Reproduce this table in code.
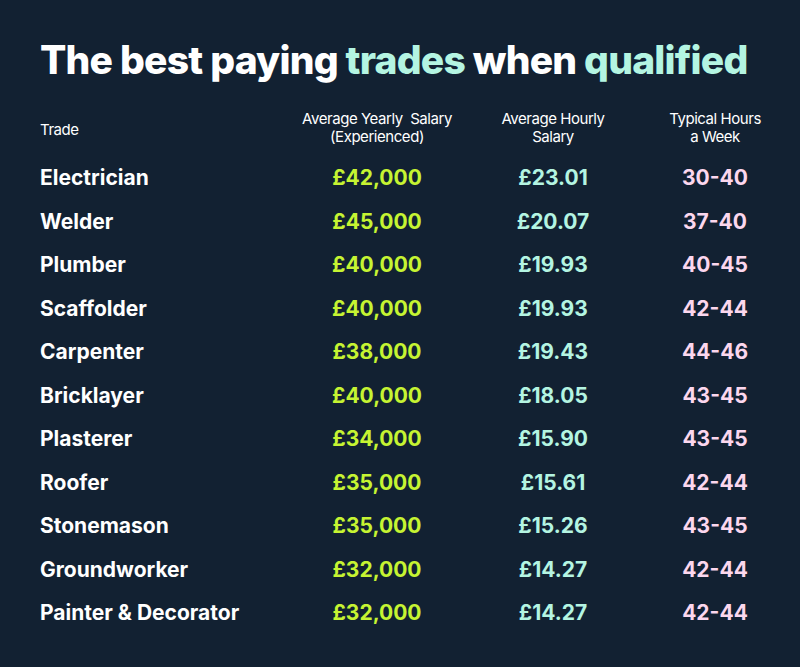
import React from "react";

type Row = {
  trade: string;
  yearly: string;
  hourly: string;
  hours: string;
};

const rows: Row[] = [
  { trade: "Electrician", yearly: "£42,000", hourly: "£23.01", hours: "30-40" },
  { trade: "Welder", yearly: "£45,000", hourly: "£20.07", hours: "37-40" },
  { trade: "Plumber", yearly: "£40,000", hourly: "£19.93", hours: "40-45" },
  { trade: "Scaffolder", yearly: "£40,000", hourly: "£19.93", hours: "42-44" },
  { trade: "Carpenter", yearly: "£38,000", hourly: "£19.43", hours: "44-46" },
  { trade: "Bricklayer", yearly: "£40,000", hourly: "£18.05", hours: "43-45" },
  { trade: "Plasterer", yearly: "£34,000", hourly: "£15.90", hours: "43-45" },
  { trade: "Roofer", yearly: "£35,000", hourly: "£15.61", hours: "42-44" },
  { trade: "Stonemason", yearly: "£35,000", hourly: "£15.26", hours: "43-45" },
  { trade: "Groundworker", yearly: "£32,000", hourly: "£14.27", hours: "42-44" },
  { trade: "Painter & Decorator", yearly: "£32,000", hourly: "£14.27", hours: "42-44" },
];

const cols = "grid grid-cols-[250px_174px_178px_146px] items-center";

export default function App() {
  return (
    <div className="h-[667px] w-[800px] bg-[#122132] pl-[40px] pt-[35px] font-['Inter',sans-serif] text-white">
      <h1 className="text-[39px] font-extrabold leading-[50px] tracking-[-0.02em]">
        The best paying <span className="text-[#b4f5e2]">trades</span> when{" "}
        <span className="text-[#b4f5e2]">qualified</span>
      </h1>

      <div className={`${cols} mt-[25px] text-[15px] leading-[18px] tracking-[-0.03em]`}>
        <div className="pt-[3px]">Trade</div>
        <div className="text-center">
          Average Yearly&nbsp; Salary
          <br />
          (Experienced)
        </div>
        <div className="text-center">
          Average Hourly
          <br />
          Salary
        </div>
        <div className="text-center">
          Typical Hours
          <br />a Week
        </div>
      </div>

      <div className="mt-[10px]">
        {rows.map((r) => (
          <div key={r.trade} className={`${cols} h-[43.5px] text-[21px] font-bold`}>
            <div>{r.trade}</div>
            <div className="text-center text-[#c6f432]">{r.yearly}</div>
            <div className="text-center text-[#b4f5e2]">{r.hourly}</div>
            <div className="text-center text-[#fcd7ee]">{r.hours}</div>
          </div>
        ))}
      </div>
    </div>
  );
}
